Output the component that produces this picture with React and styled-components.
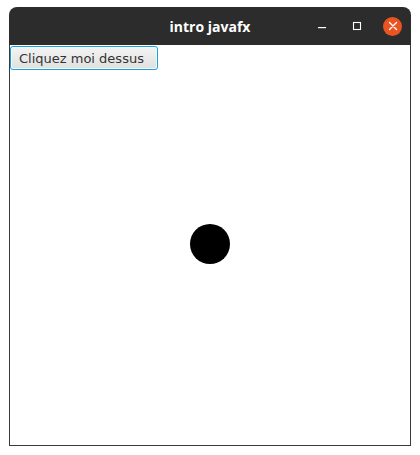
import React from 'react'
import styled, { createGlobalStyle } from 'styled-components'

const GlobalStyle = createGlobalStyle`
	html, body {
		margin: 0;
		padding: 0;
		background: #ffffff;
	}
`

const Desktop = styled.div`
	width: 420px;
	height: 455px;
	padding: 7px 0 0 9px;
	box-sizing: border-box;
`

const Window = styled.div`
	width: 402px;
	height: 439px;
	display: flex;
	flex-direction: column;
`

const TitleBar = styled.div`
	height: 38px;
	background: #2c2c2c;
	border-radius: 8px 8px 0 0;
	display: grid;
	grid-template-columns: 1fr auto 1fr;
	align-items: center;
	color: #ffffff;
	font-family: 'Open Sans', 'DejaVu Sans', sans-serif;
`

const Title = styled.div`
	grid-column: 2;
	font-weight: 700;
	font-size: 14px;
`

const Controls = styled.div`
	grid-column: 3;
	justify-self: end;
	display: flex;
	align-items: center;
	padding-right: 9px;
`

const ControlButton = styled.div`
	width: 19px;
	height: 19px;
	margin-left: ${props => props.gap || 0}px;
	display: flex;
	align-items: center;
	justify-content: center;
	border-radius: 50%;
	background: ${props => (props.close ? '#e95420' : 'transparent')};
`

const Content = styled.div`
	flex: 1;
	display: grid;
	border: 1px solid #3a3a3a;
	border-top: none;
	background: #ffffff;
`

const PushButton = styled.button`
	grid-area: 1 / 1;
	align-self: start;
	justify-self: start;
	margin: 1px 0 0 0;
	width: 148px;
	height: 24px;
	padding: 0 8px;
	font-family: 'DejaVu Sans', sans-serif;
	font-size: 13px;
	color: #333333;
	background: linear-gradient(#f4f4f4, #e0e0e0);
	border: 1px solid #12a5dc;
	border-radius: 3px;
	box-shadow: inset 0 0 0 1px #ffffff;
	text-align: left;
`

const Dot = styled.div`
	grid-area: 1 / 1;
	align-self: center;
	justify-self: center;
	width: 40px;
	height: 40px;
	border-radius: 50%;
	background: #000000;
	margin-top: -2px;
`

export default function App() {
	return (
		<Desktop>
			<GlobalStyle />
			<Window>
				<TitleBar>
					<Title>intro javafx</Title>
					<Controls>
						<ControlButton gap={11}>
							<svg width="10" height="10" viewBox="0 0 10 10">
								<rect x="1" y="6" width="8" height="1.2" fill="#ffffff" />
							</svg>
						</ControlButton>
						<ControlButton gap={16}>
							<svg width="10" height="10" viewBox="0 0 10 10">
								<rect x="1.5" y="1.5" width="7" height="7" fill="none" stroke="#ffffff" strokeWidth="1.1" />
							</svg>
						</ControlButton>
						<ControlButton close gap={17}>
							<svg width="10" height="10" viewBox="0 0 10 10">
								<path d="M1.5 1.5 L8.5 8.5 M8.5 1.5 L1.5 8.5" stroke="#ffffff" strokeWidth="1.4" strokeLinecap="round" />
							</svg>
						</ControlButton>
					</Controls>
				</TitleBar>
				<Content>
					<PushButton>Cliquez moi dessus</PushButton>
					<Dot />
				</Content>
			</Window>
		</Desktop>
	)
}
